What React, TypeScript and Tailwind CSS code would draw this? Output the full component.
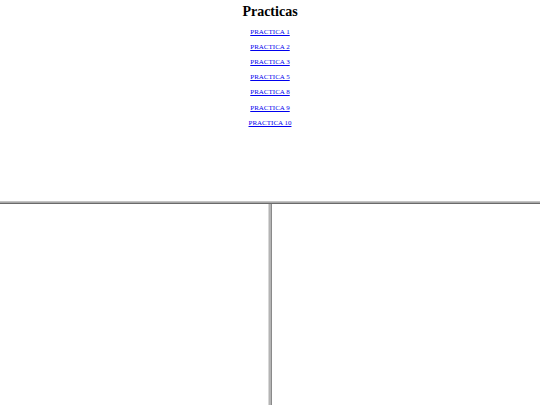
const links = ['PRACTICA 1', 'PRACTICA 2', 'PRACTICA 3', 'PRACTICA 5', 'PRACTICA 8', 'PRACTICA 9', 'PRACTICA 10'];

export default function App() {
  return (
    <div className="flex h-[405px] w-[540px] flex-col overflow-hidden bg-white font-['Liberation_Serif',serif] text-black">
      <div className="flex h-[201px] flex-col items-center">
        <h1 className="mt-[3px] h-[17px] text-[14px] font-bold leading-[17px]">Practicas</h1>
        <div className="mt-[4.7px] flex flex-col items-center">
          {links.map((l) => (
            <a key={l} href="#" className="h-[15.2px] text-[7px] leading-[15.2px] text-[#0000ee] underline">
              {l}
            </a>
          ))}
        </div>
      </div>
      <div className="h-[1px] bg-[#c4c4c4]" />
      <div className="h-[1px] bg-[#a8a8a8]" />
      <div className="h-[1px] bg-[#6a6a6a]" />
      <div className="flex flex-1">
        <div className="w-[268px]" />
        <div className="flex w-[4px]">
          <div className="w-[1px] bg-[#d8d8d8]" />
          <div className="w-[2px] bg-[#b4b4b4]" />
          <div className="w-[1px] bg-[#8a8a8a]" />
        </div>
        <div className="flex-1" />
      </div>
    </div>
  );
}
